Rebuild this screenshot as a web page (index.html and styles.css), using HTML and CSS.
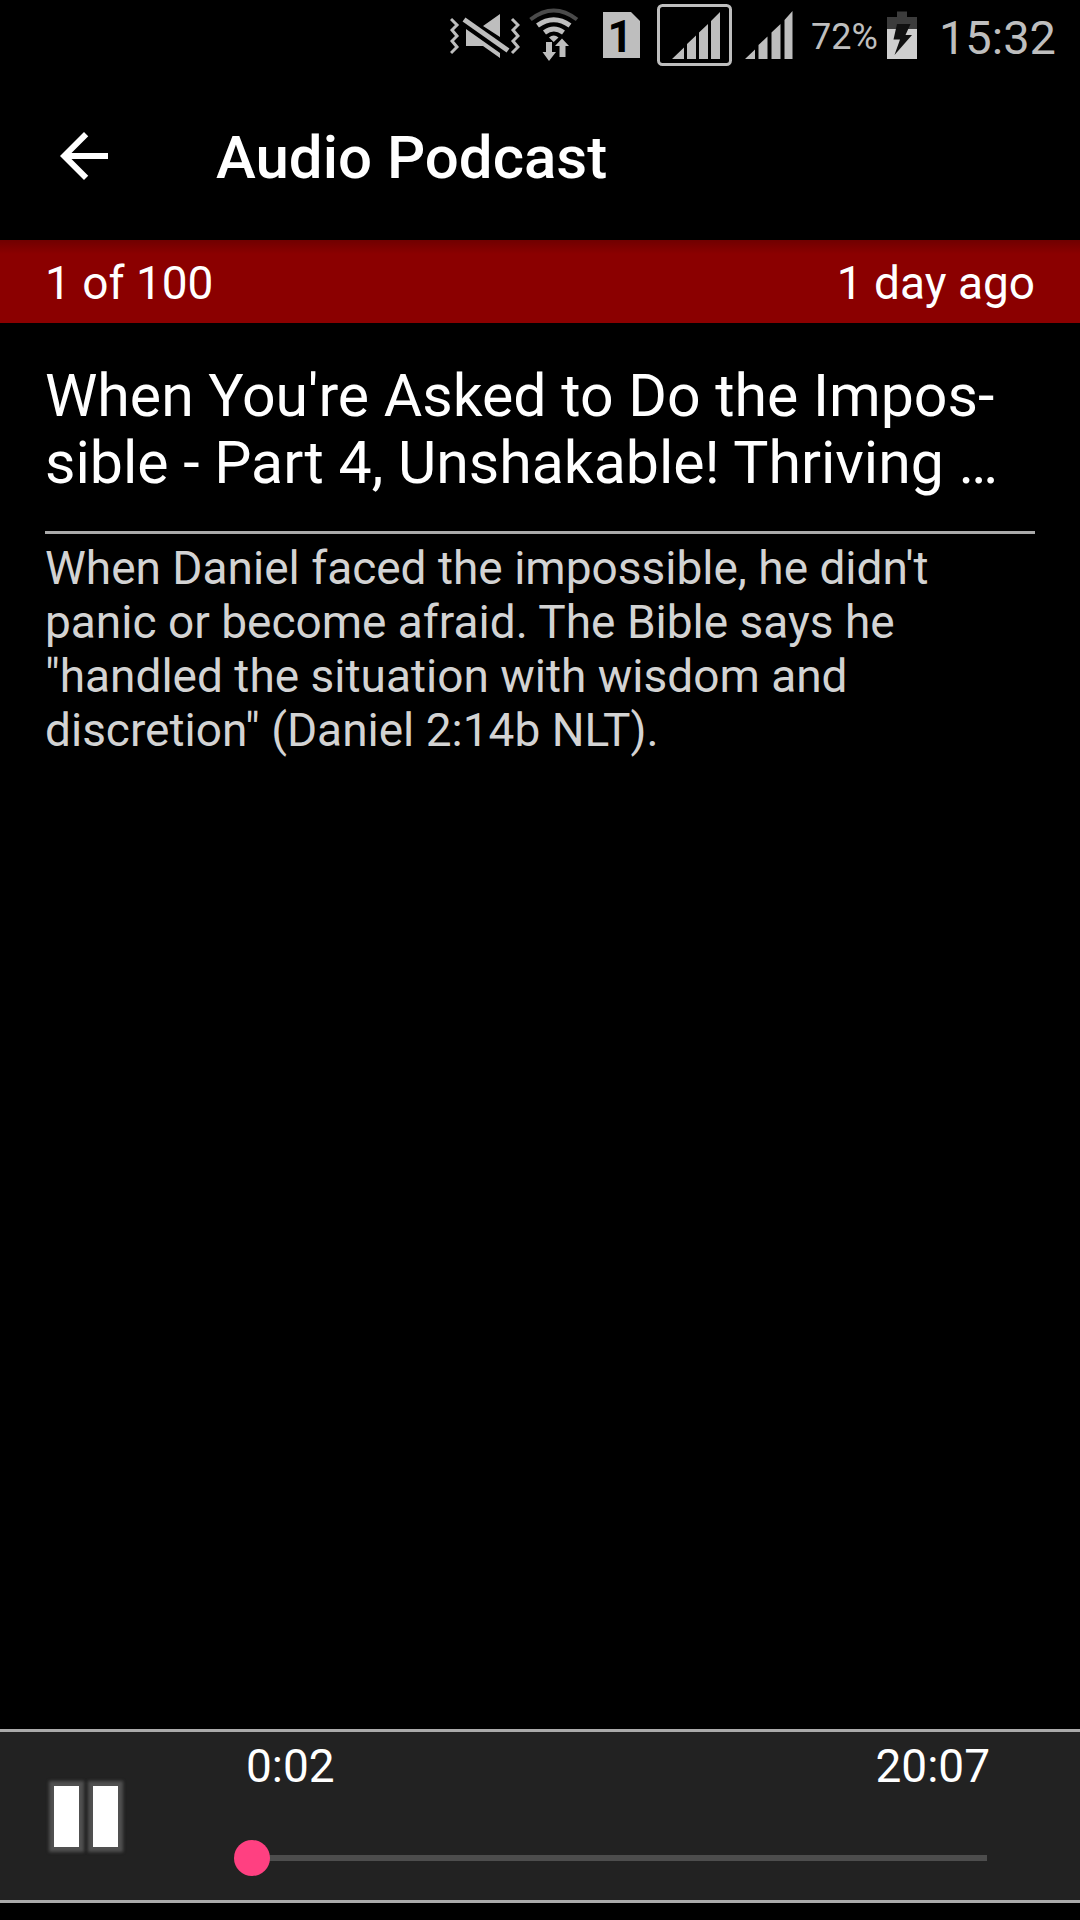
FILE: index.html
```html
<!DOCTYPE html>
<html lang="en">
<head>
  <meta charset="UTF-8" />
  <meta name="viewport" content="width=device-width, initial-scale=1.0" />
  <title>Audio Podcast</title>
  <link rel="stylesheet" href="styles.css">
</head>
<body>
  <!-- Status bar -->
  <div class="status-bar">
    <svg class="icon-mute" width="70" height="75" viewBox="0 0 70 75">
      <g fill="none" stroke="#bebebe" stroke-width="3">
        <path d="M1 19l6 6-5 5 5 6-5 5 5 6-6 6" />
        <path d="M62 19l6 6-5 5 5 6-5 5 5 6-6 6" />
        <path d="M14 19.500L58 50.500" stroke-width="5" />
      </g>
      <path fill="#bebebe" d="M33 26L50 14V37zM16 29V46H33L50 58V53z" />
    </svg>
    <svg class="icon-wifi" width="50" height="75" viewBox="0 0 50 75">
      <g fill="none" stroke="#bebebe" stroke-width="5">
        <path d="M1.500 19.500Q24.700 1.500 48 19.500" stroke="#4a4a4a" stroke-width="4" />
        <path d="M8.500 25.500Q24.700 14 41 25.500" />
        <path d="M15.500 32.500Q24.700 25.500 34.500 32.500" />
      </g>
      <path fill="#bebebe" d="M20 37.500Q24.700 33.500 29.500 37.500L24.700 42zM17 42h6v10h4L20 61 13.500 52H17zM30.500 57V46H26L33 38.500 40 46H36.500V57z" />
    </svg>
    <svg class="icon-sim" width="37" height="75" viewBox="0 0 37 75">
      <path fill="#bebebe" d="M0 12H28L37 21V58H0z" />
      <text x="17" y="52" text-anchor="middle">1</text>
    </svg>
    <svg class="icon-signal-box" width="75" height="75" viewBox="0 0 75 75">
      <rect x="1.500" y="5.500" width="72" height="59" rx="4" fill="none" stroke="#bebebe" stroke-width="3" />
      <path fill="#bebebe" d="M15 59L27 47.500V59zM30 59V44L39 35.500V59zM42 59V32.500L51 24V59zM54 59V21L63 12V59z" />
    </svg>
    <svg class="icon-signal" width="48" height="75" viewBox="0 0 48 75">
      <path fill="#bebebe" d="M0 59L10 49.500V59zM13.500 59V45L22.500 36.500V59zM26.500 59V32.500L35.500 24V59zM39.500 59V20L47.500 11V59z" />
    </svg>
    <span class="battery-level">72%</span>
    <svg class="icon-battery" width="30" height="75" viewBox="0 0 30 75">
      <path fill="#3c3c3c" d="M10 11.500H20V17H30V29H0V17H10z" />
      <path fill="#cfcfcf" d="M0 29H30V59H0z" />
      <path fill="#111" d="M10 24H23.500L18.500 35H25L7.500 55 13 39.500H6.500z" />
    </svg>
    <span class="clock">15:32</span>
  </div>

  <header class="app-bar">
    <button class="back-btn" aria-label="Back">
      <svg width="72" height="72" viewBox="0 0 24 24">
        <path fill="#fff" d="M20 11H7.830l5.590-5.590L12 4l-8 8 8 8 1.410-1.410L7.830 13H20v-2z" />
      </svg>
    </button>
    <h1>Audio Podcast</h1>
  </header>

  <div class="info-bar">
    <span>1 of 100</span>
    <span>1 day ago</span>
  </div>

  <main class="episode">
    <h2>When You're Asked to Do the Impos&shy;sible - Part 4, Unshakable! Thriving …</h2>
    <p>When Daniel faced the impossible, he didn't panic or become afraid. The Bible says he "handled the situation with wisdom and discretion" (Daniel 2:14b NLT).</p>
  </main>

  <!-- Player -->
  <footer class="player">
    <button class="pause-btn" aria-label="Pause">
      <span class="pause-bar"></span>
      <span class="pause-bar"></span>
    </button>
    <div class="progress">
      <div class="times">
        <span>0:02</span>
        <span>20:07</span>
      </div>
      <input class="seek" type="range" min="0" max="1207" value="2" aria-label="Seek">
    </div>
  </footer>
</body>
</html>
```
FILE: styles.css
```css
* {
  box-sizing: border-box;
}

body {
  margin: 0;
  min-height: 100vh;
  display: flex;
  flex-direction: column;
  font-family: Roboto, sans-serif;
  font-size: 46px;
  background: #000;
  color: #fff;
}

button {
  padding: 0;
  border: none;
  background: none;
  cursor: pointer;
}

/* Status bar */
.status-bar {
  display: flex;
  justify-content: flex-end;
  padding-right: 24px;
  line-height: 75px;
  color: #bebebe;
}

.icon-wifi {
  margin-left: 9px;
}

.icon-sim {
  margin-left: 24px;
}

.icon-sim text {
  font-size: 44px;
  font-weight: 700;
  fill: #000;
}

.icon-signal-box {
  margin-left: 17px;
}

.icon-signal {
  margin-left: 13px;
}

.battery-level {
  margin-left: 18px;
  font-size: 36px;
}

.icon-battery {
  margin-left: 9px;
}

.clock {
  margin-left: 22px;
  font-size: 47px;
}

/* App bar */
.app-bar {
  display: flex;
  align-items: center;
  gap: 96px;
  padding: 45px 48px 48px;
}

.back-btn svg {
  display: block;
}

.app-bar h1 {
  margin: 0;
  padding-top: 4px;
  font-size: 60px;
  font-weight: 500;
  line-height: 68px;
}

.info-bar {
  display: flex;
  justify-content: space-between;
  padding: 16px 45px 13px;
  line-height: 54px;
  background: linear-gradient(#700000, #8b0000 14px);
}

/* Episode */
.episode {
  flex: 1;
  padding: 39px 45px;
}

.episode h2 {
  margin: 0;
  padding-bottom: 35px;
  border-bottom: 3px solid #aaa;
  font-size: 59px;
  font-weight: 400;
  line-height: 67px;
  hyphens: manual;
}

.episode p {
  margin: 7px 0 0;
  line-height: 54px;
  color: #d3d3d3;
}

/* Player */
.player {
  display: flex;
  align-items: center;
  margin-bottom: 17px;
  padding: 0 75px 0 54px;
  border-top: 3px solid #aaa;
  border-bottom: 3px solid #aaa;
  background: #222;
}

.pause-btn {
  display: flex;
  gap: 14px;
}

.pause-bar {
  width: 25px;
  height: 61px;
  background: #fff;
  box-shadow: 0 0 3px 5px #505050;
}

.progress {
  flex: 1;
  margin-left: 115px;
  padding: 7px 0 24px;
}

.times {
  display: flex;
  justify-content: space-between;
  padding: 0 15px 0 13px;
  line-height: 54px;
}

.seek {
  -webkit-appearance: none;
  appearance: none;
  display: block;
  width: 100%;
  height: 36px;
  margin: 47px 0 0;
  background: linear-gradient(#4d4d4d, #4d4d4d) center / calc(100% - 36px) 6px no-repeat;
}

.seek::-webkit-slider-thumb {
  -webkit-appearance: none;
  width: 36px;
  height: 36px;
  border-radius: 50%;
  background: #ff4081;
}
```
